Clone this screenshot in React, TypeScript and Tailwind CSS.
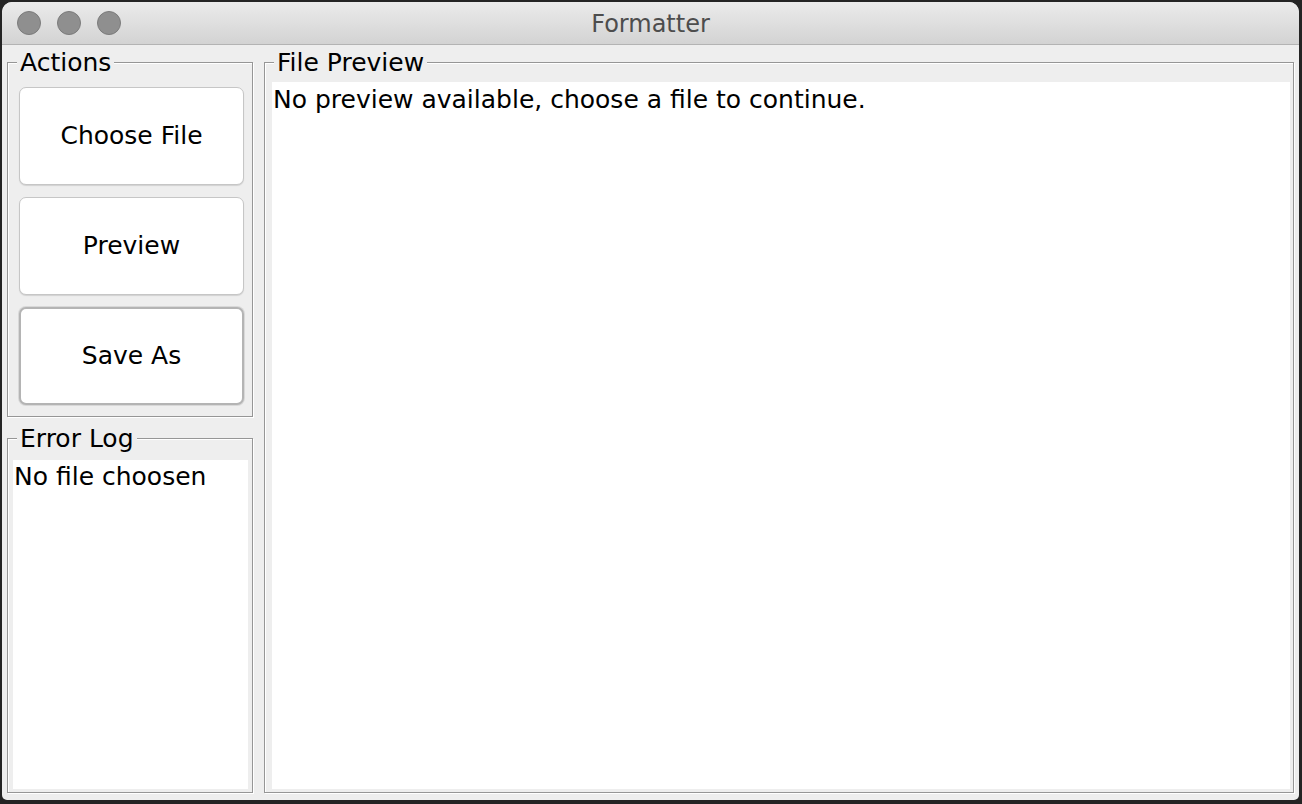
import React from 'react';

const font = { fontFamily: '"DejaVu Sans", "Liberation Sans", sans-serif' };

interface GroupProps {
  title: string;
  className?: string;
  children?: React.ReactNode;
}

// Swing-style titled etched border
const Group: React.FC<GroupProps> = ({ title, className = '', children }) => (
  <div
    className={`relative border-[1.5px] border-[#969696] shadow-[1px_1px_0_#ffffff,inset_1px_1px_0_#ffffff] ${className}`}
  >
    <span className="absolute left-[9px] -top-[15px] bg-[#eeeeee] px-[3px] text-[25px] leading-[30px] text-black">
      {title}
    </span>
    {children}
  </div>
);

const ActionButton: React.FC<{ label: string; focused?: boolean }> = ({ label, focused }) => (
  <button
    className={`h-[98px] w-full rounded-[7px] bg-white text-[25px] text-black ${
      focused
        ? 'border-2 border-[#b4b4b4] shadow-[0_0_0_1px_#d8d8d8]'
        : 'border border-[#c6c6c6] shadow-[0_1px_1px_rgba(0,0,0,0.12)]'
    }`}
  >
    {label}
  </button>
);

export default function App() {
  return (
    <div className="w-[1302px] h-[804px] bg-[#242424] p-[2px] pr-[3px] pb-[4px]" style={font}>
      <div className="flex h-full flex-col overflow-hidden rounded-t-[10px] rounded-b-[5px] bg-[#eeeeee]">
        {/* title bar */}
        <div className="relative flex h-[43px] shrink-0 items-center justify-center border-b border-[#b3b3b3] bg-gradient-to-b from-[#ebebeb] to-[#d3d3d3]">
          <div className="absolute left-[15px] top-[9px] flex gap-[16px]">
            <span className="h-[24px] w-[24px] rounded-full border border-[#7b7b7b] bg-[#8f8f8f]" />
            <span className="h-[24px] w-[24px] rounded-full border border-[#7b7b7b] bg-[#8f8f8f]" />
            <span className="h-[24px] w-[24px] rounded-full border border-[#7b7b7b] bg-[#8f8f8f]" />
          </div>
          <span className="pt-[2px] text-[24px] text-[#4d4d4d]">Formatter</span>
        </div>

        {/* content */}
        <div className="flex flex-1 gap-[11px] pl-[5px] pr-[5px] pt-[17px] pb-[7px]">
          <div className="flex w-[246px] shrink-0 flex-col gap-[21px]">
            <Group title="Actions" className="h-[355px]">
              <div className="flex flex-col gap-[12px] pl-[11px] pr-[8px] pt-[24px]">
                <ActionButton label="Choose File" />
                <ActionButton label="Preview" />
                <ActionButton label="Save As" focused />
              </div>
            </Group>
            <Group title="Error Log" className="flex-1">
              <div className="absolute left-[5px] right-[4px] top-[21px] bottom-[3px] bg-white px-[1px] text-[25px] leading-[34px] text-black">
                No file choosen
              </div>
            </Group>
          </div>
          <Group title="File Preview" className="flex-1">
            <div className="absolute left-[7px] right-[3px] top-[19px] bottom-[3px] bg-white px-[1px] text-[25px] leading-[36px] text-black">
              No preview available, choose a file to continue.
            </div>
          </Group>
        </div>
      </div>
    </div>
  );
}
